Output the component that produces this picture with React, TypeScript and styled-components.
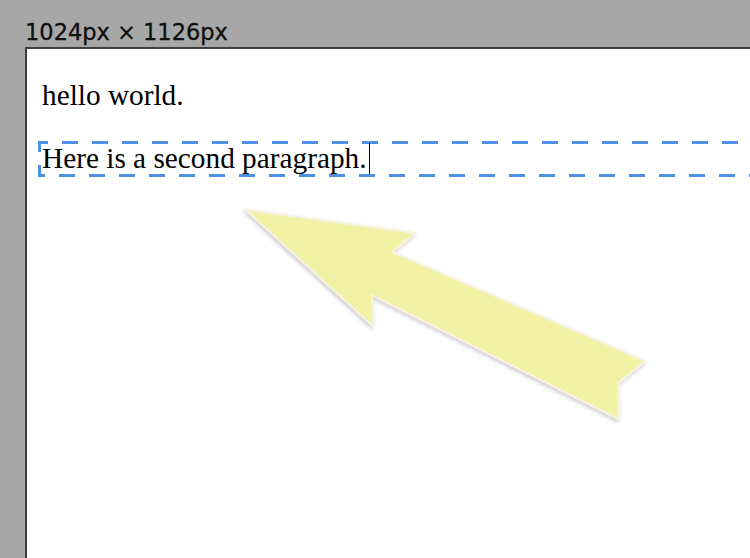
import React from "react";
import styled, { createGlobalStyle } from "styled-components";

const GlobalStyle = createGlobalStyle`
    html, body {
        margin: 0;
        padding: 0;
        background: #a7a7a7;
    }
`

const Page = styled.div`
    position: relative;
    height: 100vh;
    overflow: hidden;
    display: flex;
    flex-direction: column;
`

const SizeLabel = styled.div`
    box-sizing: border-box;
    height: 47px;
    padding: 19px 0 0 25px;
    font-family: "DejaVu Sans", sans-serif;
    font-size: 22.5px;
    line-height: 26px;
    color: #0e0e0e;
    -webkit-text-stroke: 0.3px #0e0e0e;
    white-space: nowrap;
`

const Frame = styled.div`
    flex: 1;
    margin-left: 25px;
    padding: 28px 0 0 15px;
    background: #fff;
    border-left: 2px solid #3e3e3e;
    border-top: 2px solid #3e3e3e;
    overflow: hidden;
    font-family: "Liberation Serif", "Times New Roman", serif;
    font-size: 29.3px;
    line-height: 36px;
    color: #000;
`

const Para = styled.p`
    margin: 0 0 28px 0;
    white-space: nowrap;
`

const dash = "#4b92e6";

const SelectedPara = styled(Para)`
    margin-left: -4px;
    margin-right: -40px;
    padding-left: 4px;
    line-height: 35px;
    padding-bottom: 1px;
    background:
        linear-gradient(to right, ${dash} 16px, transparent 16px) -6px 0 / 30px 3px repeat-x,
        linear-gradient(to right, ${dash} 16px, transparent 16px) -9px 100% / 30px 3px repeat-x,
        linear-gradient(to bottom, ${dash} 0 11px, transparent 11px 24px, ${dash} 24px) 0 0 / 3px 100% no-repeat;
`

const Caret = styled.span`
    display: inline-block;
    width: 1px;
    height: 31px;
    margin-left: 2px;
    vertical-align: -6px;
    background: #000;
`

const ArrowWrap = styled.svg`
    position: absolute;
    left: 230px;
    top: 195px;
    width: 440px;
    height: 240px;
    overflow: visible;
`

const Arrow = () => (
    <ArrowWrap viewBox="0 0 440 240">
        <defs>
            <filter id="arrowShadow" x="-10%" y="-10%" width="120%" height="130%">
                <feDropShadow dx="-1" dy="2" stdDeviation="2" floodColor="#000" floodOpacity="0.22" />
            </filter>
        </defs>
        <polygon
            points="16,15 185,38 162,57 415,166 388,188 389,224 142,100 143,131"
            fill="#f3f1a4"
            stroke="#f5f3dc"
            strokeWidth="2"
            strokeLinejoin="miter"
            filter="url(#arrowShadow)"
        />
    </ArrowWrap>
)

const App = () => {
    return (
        <Page>
            <GlobalStyle />
            <SizeLabel>1024px × 1126px</SizeLabel>
            <Frame>
                <Para>hello world.</Para>
                <SelectedPara>
                    Here is a second paragraph.<Caret />
                </SelectedPara>
            </Frame>
            <Arrow />
        </Page>
    )
}

export default App;
